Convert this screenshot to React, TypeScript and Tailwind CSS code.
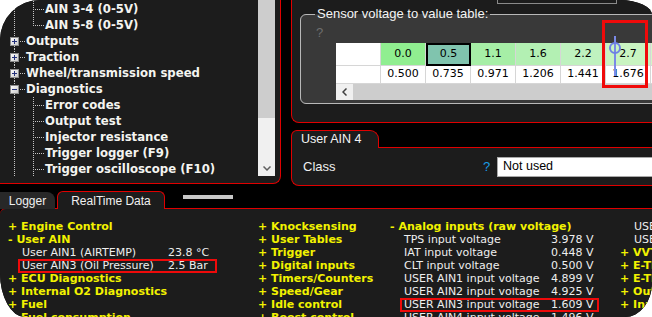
const treeRows = [
  { level: 1, label: 'AIN 3-4 (0-5V)', last: false },
  { level: 1, label: 'AIN 5-8 (0-5V)', last: true },
  { level: 0, label: 'Outputs', open: false },
  { level: 0, label: 'Traction', open: false },
  { level: 0, label: 'Wheel/transmission speed', open: false },
  { level: 0, label: 'Diagnostics', open: true },
  { level: 1, label: 'Error codes', last: false },
  { level: 1, label: 'Output test', last: false },
  { level: 1, label: 'Injector resistance', last: false },
  { level: 1, label: 'Trigger logger (F9)', last: false },
  { level: 1, label: 'Trigger oscilloscope (F10)', last: false },
]

const headerCells = [
  { v: '0.0', bg: 'bg-[#90ee90]' },
  { v: '0.5', bg: 'bg-[#80c4ae]', selected: true },
  { v: '1.1', bg: 'bg-[#a6eea6]' },
  { v: '1.6', bg: 'bg-[#b3f0b3]' },
  { v: '2.2', bg: 'bg-[#bff2bf]' },
  { v: '2.7', bg: 'bg-[#c9f4c1]' },
  { v: '3.2', bg: 'bg-[#d2f6c8]' },
]
const dataCells = ['0.500', '0.735', '0.971', '1.206', '1.441', '1.676', '1.912']

function Connector({ level, last, open }: { level: number; last?: boolean; open?: boolean }) {
  const dot = { stroke: '#c4c4c4', strokeDasharray: '1 1', strokeWidth: 1 }
  if (level === 1) {
    return (
      <svg width="45" height="16" className="shrink-0">
        <line x1="14.5" y1="0" x2="14.5" y2="16" {...dot} />
        <line x1="33.5" y1="0" x2="33.5" y2={last ? 9 : 16} {...dot} />
        <line x1="35" y1="8.5" x2="44" y2="8.5" {...dot} />
      </svg>
    )
  }
  return (
    <svg width="26" height="16" className="shrink-0">
      <line x1="14.5" y1="0" x2="14.5" y2="4" {...dot} />
      <line x1="14.5" y1="13" x2="14.5" y2="16" {...dot} />
      <defs>
        <linearGradient id="bx" x1="0" y1="0" x2="1" y2="1">
          <stop offset="0" stopColor="#ffffff" />
          <stop offset="1" stopColor="#c8c8c8" />
        </linearGradient>
      </defs>
      <rect x="10.5" y="4.5" width="8" height="8" fill="url(#bx)" stroke="#8c8c8c" />
      <line x1="12" y1="8.5" x2="17" y2="8.5" stroke="#23307a" />
      {!open && <line x1="14.5" y1="6" x2="14.5" y2="11" stroke="#23307a" />}
      <line x1="20" y1="8.5" x2="25" y2="8.5" {...dot} />
    </svg>
  )
}

function TreePanel() {
  return (
    <div className="flex h-[184px] w-[281px] shrink-0 rounded-br-[8px] border-r border-b border-[#e00000] bg-[#1c1c1c]">
      <div className="flex-1 pt-[1px]">
        {treeRows.map((r, i) => (
          <div key={i} className="flex h-[16px] items-center">
            <Connector level={r.level} last={r.last} open={r.open} />
            <span className="text-[11.7px] leading-[16px] font-bold whitespace-nowrap text-[#f4f4f0]">{r.label}</span>
          </div>
        ))}
      </div>
      <div className="mr-[5px] flex h-[176px] w-[17px] flex-col bg-[#f0f0f0]">
        <div className="h-[118px] bg-[#cdcdcd]" />
        <div className="flex flex-1 items-end justify-center pb-[5px]">
          <svg width="8" height="5">
            <path d="M0.5 0.5 L4 4 L7.5 0.5" fill="none" stroke="#606060" strokeWidth="1.5" />
          </svg>
        </div>
      </div>
    </div>
  )
}

function TablePanel() {
  return (
    <div className="h-[123px] shrink-0 overflow-hidden rounded-bl-[8px] border-l border-b border-[#e00000] bg-[#1c1c1c]">
      <div className="ml-[205px] h-[4px] w-[120px] border-x border-b border-[#8a8a8a]" />
      <fieldset className="mt-[3px] ml-[8px] h-[97px] w-[400px] rounded-[6px] border border-[#b8b8b8] bg-[#393939]">
        <legend className="ml-[14px] px-[2px] font-['Liberation_Sans',sans-serif] text-[13px] leading-[14px] text-[#f4f4f4]">
          Sensor voltage to value table:
        </legend>
        <div className="ml-[15px] mt-[5px] h-[17px] font-['Liberation_Sans',sans-serif] text-[13px] leading-[13px] text-[#6e6e6e]">?</div>
        <div className="ml-[35px] w-[360px] bg-white">
          <div className="flex h-[23px]">
            <div className="w-[45px] shrink-0 border-r border-b border-[#d6d6d6] bg-white" />
            {headerCells.map((c, i) => (
              <div
                key={i}
                className={`flex w-[45px] shrink-0 items-center justify-center text-[11px] text-black ${c.bg} ${
                  c.selected ? 'border-2 border-black' : 'border-r border-b border-[#d6d6d6]'
                }`}
              >
                {c.v}
              </div>
            ))}
          </div>
          <div className="flex h-[18px]">
            <div className="w-[45px] shrink-0 border-r border-b border-[#d6d6d6]" />
            {dataCells.map((v, i) => (
              <div key={i} className="flex w-[45px] shrink-0 items-center justify-center border-r border-b border-[#d6d6d6] text-[11px] text-black">
                {v}
              </div>
            ))}
          </div>
          <div className="flex h-[16px] bg-[#cdcdcd]">
            <div className="flex w-[17px] items-center justify-center bg-[#f0f0f0]">
              <svg width="5" height="8">
                <path d="M4.5 0.5 L1 4 L4.5 7.5" fill="none" stroke="#404040" strokeWidth="1.5" />
              </svg>
            </div>
          </div>
        </div>
      </fieldset>
    </div>
  )
}

function ClassPanel() {
  return (
    <div className="mt-[7px] flex flex-col font-['Liberation_Sans',sans-serif]">
      <div className="relative z-10 -mb-px flex h-[18px] w-[88px] items-center rounded-tl-[6px] rounded-tr-[9px] border-x border-t border-[#e00000] bg-[#1c1c1c] pl-[9px] text-[12.5px] text-[#f4f4f4]">
        User AIN 4
      </div>
      <div className="flex h-[39px] items-center rounded-bl-[8px] border-l border-t border-b border-[#e00000] bg-[#1c1c1c] pl-[11px]">
        <span className="w-[180px] text-[13px] text-[#f0f0f0]">Class</span>
        <span className="w-[14px] text-[13px] text-[#1a9be6]">?</span>
        <div className="flex h-[20px] flex-1 items-center border border-[#a8a8a8] bg-white pl-[5px] text-[12.5px] text-black">Not used</div>
      </div>
    </div>
  )
}

function BottomTabs() {
  return (
    <div className="flex h-[22px] items-end font-['Liberation_Sans',sans-serif] text-[12px]">
      <div className="-mb-px flex h-[17px] w-[55px] items-center justify-center rounded-tr-[8px] bg-[#282828] text-[#f0f0f0]">Logger</div>
      <div className="relative z-10 -mb-px ml-[2px] flex h-[18px] w-[108px] items-center justify-center rounded-t-[6px] border-x border-t border-[#e00000] bg-[#1c1c1c] text-[#f0f0f0]">
        RealTime Data
      </div>
      <div className="mb-[9px] ml-[18px] h-[4px] w-[50px] bg-[#c8c8c8]" />
    </div>
  )
}

type Item =
  | { kind: 'group'; text: string }
  | { kind: 'value'; label: string; value: string; box?: boolean }
  | { kind: 'cut'; text: string }

const col1: Item[] = [
  { kind: 'group', text: '+ Engine Control' },
  { kind: 'group', text: '- User AIN' },
  { kind: 'value', label: 'User AIN1 (AIRTEMP)', value: '23.8 °C' },
  { kind: 'value', label: 'User AIN3 (Oil Pressure)', value: '2.5 Bar', box: true },
  { kind: 'group', text: '+ ECU Diagnostics' },
  { kind: 'group', text: '+ Internal O2 Diagnostics' },
  { kind: 'group', text: '+ Fuel' },
  { kind: 'group', text: '+ Fuel consumption' },
]
const col2: Item[] = [
  { kind: 'group', text: '+ Knocksensing' },
  { kind: 'group', text: '+ User Tables' },
  { kind: 'group', text: '+ Trigger' },
  { kind: 'group', text: '+ Digital inputs' },
  { kind: 'group', text: '+ Timers/Counters' },
  { kind: 'group', text: '+ Speed/Gear' },
  { kind: 'group', text: '+ Idle control' },
  { kind: 'group', text: '+ Boost control' },
]
const col3: Item[] = [
  { kind: 'group', text: '- Analog inputs (raw voltage)' },
  { kind: 'value', label: 'TPS input voltage', value: '3.978 V' },
  { kind: 'value', label: 'IAT input voltage', value: '0.448 V' },
  { kind: 'value', label: 'CLT input voltage', value: '0.500 V' },
  { kind: 'value', label: 'USER AIN1 input voltage', value: '4.899 V' },
  { kind: 'value', label: 'USER AIN2 input voltage', value: '4.925 V' },
  { kind: 'value', label: 'USER AIN3 input voltage', value: '1.609 V', box: true },
  { kind: 'value', label: 'USER AIN4 input voltage', value: '1.496 V' },
]
const col4: Item[] = [
  { kind: 'cut', text: 'USER AIN5 input voltage' },
  { kind: 'cut', text: 'USER AIN6 input voltage' },
  { kind: 'group', text: '+ VVT' },
  { kind: 'group', text: '+ E-Throttle' },
  { kind: 'group', text: '+ E-Throttle 2' },
  { kind: 'group', text: '+ Outputs' },
  { kind: 'group', text: '+ Inputs' },
]

function Column({ items, valueCol }: { items: Item[]; valueCol: string }) {
  return (
    <div className="flex flex-col overflow-hidden whitespace-nowrap">
      {items.map((it, i) => {
        if (it.kind === 'group') {
          return (
            <div key={i} className="h-[13px] text-[11px] leading-[13px] font-bold text-[#f2f200]">
              {it.text}
            </div>
          )
        }
        if (it.kind === 'cut') {
          return (
            <div key={i} className="h-[13px] pl-[14px] text-[11px] leading-[13px] text-[#eeeeee]">
              {it.text}
            </div>
          )
        }
        return (
          <div key={i} className="relative flex h-[13px] pl-[14px] text-[11px] leading-[13px] text-[#eeeeee]">
            <span className={`${valueCol} shrink-0`}>{it.label}</span>
            <span>{it.value}</span>
            {it.box && <span className="absolute top-[-0.5px] left-[10px] h-[14px] w-[199px] border-2 border-[#ee0a0a]" />}
          </div>
        )
      })}
    </div>
  )
}

function DataPanel() {
  return (
    <div className="grid h-[109px] grid-cols-[250px_132px_230px_1fr] rounded-tl-[6px] border-t border-[#e00000] bg-[#1c1c1c] pt-[11px] pl-[8px]">
      <Column items={col1} valueCol="w-[146px]" />
      <Column items={col2} valueCol="w-[146px]" />
      <Column items={col3} valueCol="w-[147px]" />
      <Column items={col4} valueCol="w-[147px]" />
    </div>
  )
}

export default function App() {
  return (
    <div className="h-[317px] w-[652px] bg-white">
      <div className="relative h-full w-full overflow-hidden rounded-tl-[40px] rounded-tr-[32px_15px] rounded-br-[27px_34px] rounded-bl-[25px_44px] bg-black font-['DejaVu_Sans',sans-serif]">
        <div className="flex h-[186px]">
          <TreePanel />
          <div className="ml-[10px] flex flex-1 flex-col">
            <TablePanel />
            <ClassPanel />
          </div>
        </div>
        <BottomTabs />
        <DataPanel />

        {/* highlight and cursor drawn over the table */}
        <div className="absolute top-[20px] left-[602px] h-[68px] w-[46px] border-[3px] border-[#f00a0a]" />
        <svg className="absolute top-[36px] left-[608px]" width="14" height="40">
          <line x1="7" y1="0" x2="7" y2="40" stroke="#7b8ae6" strokeWidth="2" />
          <circle cx="7" cy="12" r="5" fill="none" stroke="#6f80e4" strokeWidth="2" />
        </svg>
      </div>
    </div>
  )
}
